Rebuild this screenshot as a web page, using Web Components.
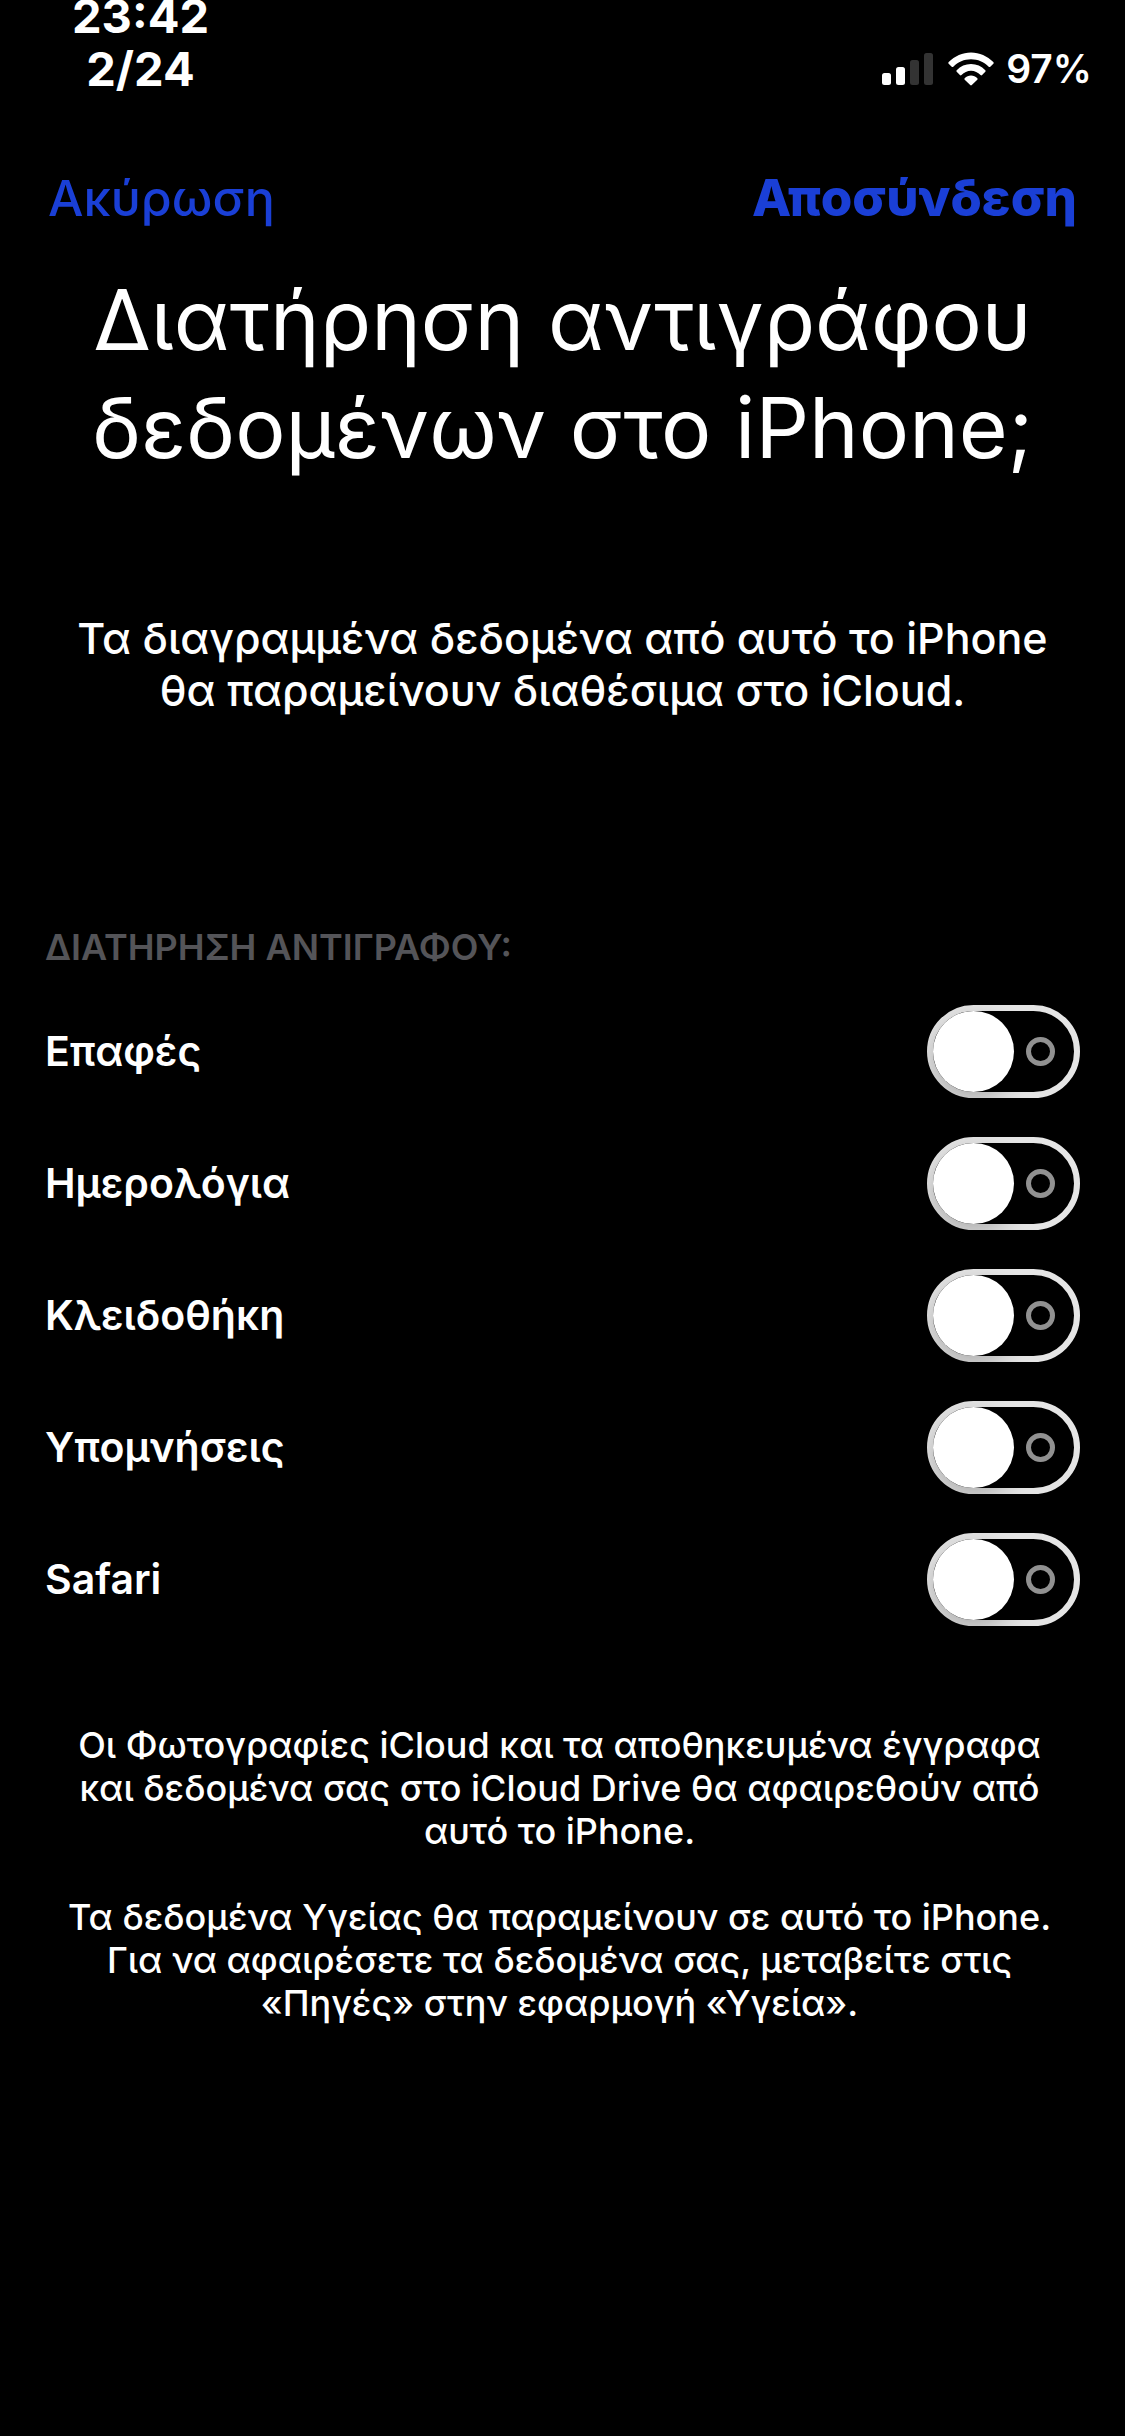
<!DOCTYPE html>
<html lang="el">
<head>
<meta charset="utf-8">
<meta name="viewport" content="width=device-width, initial-scale=1">
<title>iCloud</title>
<style>
    body {
        margin: 0;
        background: #000;
        color: #fff;
        font-family: Inter, "Liberation Sans", sans-serif;
    }
</style>
</head>
<body>
<keep-copy-page></keep-copy-page>

<script>
const dataTypes = ["Επαφές", "Ημερολόγια", "Κλειδοθήκη", "Υπομνήσεις", "Safari"];

const statusTemplate = `
<style>
    :host {
        display: flex;
        align-items: center;
        justify-content: space-between;
        height: 84px;
        padding: 0 33px 0 72px;
    }
    .clock {
        font-size: 47px;
        font-weight: 700;
        line-height: 53px;
        text-align: center;
    }
    .clock time { display: block; }
    .indicators {
        display: flex;
        align-items: center;
        box-sizing: border-box;
        height: 100%;
        padding-top: 54px;
        font-size: 39px;
        font-weight: 600;
        line-height: 30px;
    }
    .indicators svg { display: block; }
    .wifi { margin: 0 12px 0 14px; }
</style>
<div class="clock"><time>23:42</time><time>2/24</time></div>
<div class="indicators">
    <svg width="52" height="32" viewBox="0 0 52 32" fill="#fff" aria-hidden="true">
        <rect x="0" y="20" width="9" height="12" rx="2.5"/>
        <rect x="14" y="14" width="9" height="18" rx="2.5"/>
        <rect x="28" y="7" width="9" height="25" rx="2.5" fill="#333"/>
        <rect x="42" y="0" width="9" height="32" rx="2.5" fill="#333"/>
    </svg>
    <svg class="wifi" width="46" height="34" viewBox="0 0 46 34" fill="#fff" aria-hidden="true">
        <path d="M.7 10.1C6.700 4 14.500.5 23 .5s16.300 3.500 22.300 9.600q.8.8 0 1.600l-3 3q-.8.8-1.600 0C36 10 29.800 7.300 23 7.300S10 10 5.300 14.700q-.8.8-1.600 0l-3-3q-.8-.8 0-1.600z"/>
        <path d="M8.700 18.200C12.500 14.200 17.500 12 23 12s10.500 2.200 14.300 6.200q.8.800 0 1.600l-3.200 3.200q-.8.800-1.600 0C29.900 20.300 26.700 18.700 23 18.700s-6.900 1.600-9.500 4.300q-.8.800-1.600 0l-3.200-3.200q-.8-.8 0-1.600z"/>
        <path d="M16.700 26.200c1.700-1.700 3.900-2.700 6.300-2.700s4.600 1 6.300 2.700q.8.800 0 1.600l-5.500 5.300q-.8.800-1.600 0l-5.500-5.300q-.8-.8 0-1.600z"/>
    </svg>
    <span>97%</span>
</div>
`;

const navTemplate = `
<style>
    :host {
        display: flex;
        align-items: center;
        justify-content: space-between;
        padding: 84px 48px 0;
    }
    button {
        padding: 0;
        border: none;
        background: none;
        color: #1a3fd6;
        font: 500 50px/60px Inter, "Liberation Sans", sans-serif;
        cursor: pointer;
    }
    .primary {
        font-size: 51px;
        font-weight: 800;
    }
</style>
<button type="button">Ακύρωση</button>
<button type="button" class="primary">Αποσύνδεση</button>
`;

const introTemplate = `
<style>
    :host {
        display: block;
        padding: 38px 60px 0;
        text-align: center;
    }
    h1 {
        margin: 0;
        font-size: 84px;
        font-weight: 400;
        line-height: 108px;
    }
    p {
        margin: 130px 0 0;
        font-size: 43px;
        font-weight: 500;
        line-height: 52px;
    }
</style>
<h1><slot name="title"></slot></h1>
<p><slot></slot></p>
`;

const rowTemplate = `
<style>
    :host { display: block; }
    label {
        display: flex;
        align-items: center;
        justify-content: space-between;
        height: 132px;
        font-size: 41px;
        font-weight: 600;
    }
    input {
        appearance: none;
        display: flex;
        align-items: center;
        box-sizing: border-box;
        width: 153px;
        height: 93px;
        margin: 0;
        border: 6px solid #e5e5e5;
        border-radius: 47px;
        background: #000;
        cursor: pointer;
    }
    input::before {
        content: "";
        width: 81px;
        height: 81px;
        border-radius: 50%;
        background: #fff;
        box-shadow: 0 9px 24px rgba(0, 0, 0, 0.25);
    }
    input::after {
        content: "";
        box-sizing: border-box;
        width: 29px;
        height: 29px;
        margin-left: 12px;
        border: 5px solid #919191;
        border-radius: 50%;
    }
    input:checked { background: #30d158; }
    input:checked::before { order: 1; margin-left: 19px; }
</style>
<label><slot></slot><input type="checkbox" role="switch"></label>
`;

const groupTemplate = `
<style>
    :host {
        display: block;
        padding: 208px 45px 0;
    }
    h2 {
        margin: 0 0 15px;
        color: #545458;
        font-size: 36px;
        font-weight: 600;
        line-height: 46px;
    }
</style>
<h2>ΔΙΑΤΗΡΗΣΗ ΑΝΤΙΓΡΑΦΟΥ:</h2>
<slot></slot>
`;

const footnoteTemplate = `
<style>
    :host {
        display: flex;
        flex-direction: column;
        gap: 43px;
        padding: 79px 66px 0 60px;
        font-size: 36px;
        font-weight: 500;
        line-height: 43px;
        text-align: center;
    }
    ::slotted(p) { margin: 0; }
</style>
<slot></slot>
`;

const pageTemplate = `
<style>
    :host { display: block; overflow: hidden; }
</style>
<status-bar></status-bar>
<nav-bar></nav-bar>
<main>
    <page-intro>
        <span slot="title">Διατήρηση αντιγράφου δεδομένων στο iPhone;</span>
        Τα διαγραμμένα δεδομένα από αυτό το iPhone θα παραμείνουν διαθέσιμα στο iCloud.
    </page-intro>
    <switch-group>
        ${dataTypes.map((name) => `<switch-row>${name}</switch-row>`).join("")}
    </switch-group>
    <foot-note>
        <p>Οι Φωτογραφίες iCloud και τα αποθηκευμένα έγγραφα και δεδομένα σας στο iCloud Drive θα αφαιρεθούν από αυτό το iPhone.</p>
        <p>Τα δεδομένα Υγείας θα παραμείνουν σε αυτό το iPhone. Για να αφαιρέσετε τα δεδομένα σας, μεταβείτε στις «Πηγές» στην εφαρμογή «Υγεία».</p>
    </foot-note>
</main>
`;

function define(name, template) {
    customElements.define(name, class extends HTMLElement {
        connectedCallback() {
            if (this.shadowRoot) return;
            this.attachShadow({ mode: "open" }).innerHTML = template;
        }
    });
}

// group slots its rows as light children of the page's root
define("status-bar", statusTemplate);
define("nav-bar", navTemplate);
define("page-intro", introTemplate);
define("switch-row", rowTemplate);
define("switch-group", groupTemplate);
define("foot-note", footnoteTemplate);
define("keep-copy-page", pageTemplate);
</script>
</body>
</html>
